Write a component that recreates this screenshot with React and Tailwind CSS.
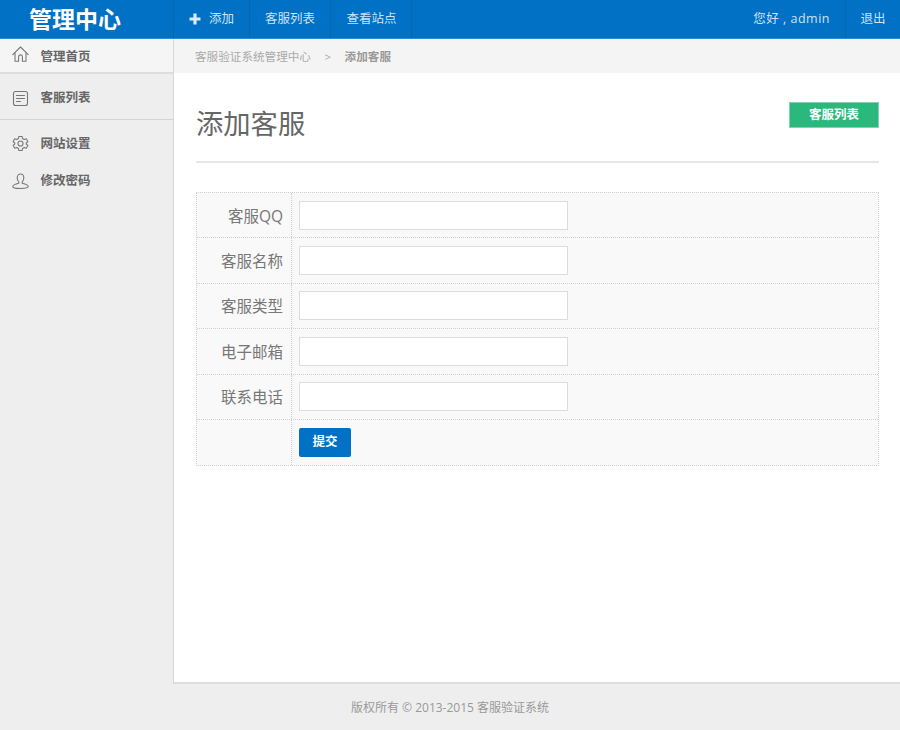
import React from 'react'

const font = { fontFamily: '"Open Sans", "Noto Sans CJK SC", sans-serif' }

function HomeIcon() {
  return (
    <svg width="17" height="17" viewBox="0 0 17 17" fill="none" stroke="#777" strokeWidth="1.1" strokeLinejoin="round" strokeLinecap="round">
      <path d="M0.8 8.6 8.5 1 16.2 8.6" />
      <path d="M3 7v8.2h3.6v-4.400a1.900 1.900 0 0 1 3.800 0v4.400H14V7" />
    </svg>
  )
}

function ListIcon() {
  return (
    <svg width="17" height="17" viewBox="0 0 17 17" fill="none" stroke="#777" strokeWidth="1.1" strokeLinecap="round">
      <rect x="1.5" y="1.5" width="14" height="14" rx="2" />
      <path d="M4.500 5.500h8M4.500 8.500h8M4.500 11.500h4" />
    </svg>
  )
}

function GearIcon() {
  return (
    <svg width="17" height="17" viewBox="0 0 24 24" fill="none" stroke="#777" strokeWidth="1.5" strokeLinejoin="round">
      <path d="M9.700 2h4.600l.6 3 2.300 1.300 2.900-1 2.300 4-2.300 2v1.400l2.300 2-2.300 4-2.900-1-2.300 1.300-.6 3H9.700l-.6-3-2.300-1.300-2.900 1-2.300-4 2.300-2v-1.400l-2.300-2 2.300-4 2.900 1L9.100 5z" />
      <circle cx="12" cy="12" r="3.600" />
    </svg>
  )
}

function UserIcon() {
  return (
    <svg width="17" height="17" viewBox="0 0 17 17" fill="none" stroke="#777" strokeWidth="1.1" strokeLinejoin="round">
      <path d="M5.200 5c0-2.200 1.400-4 3.300-4s3.300 1.800 3.300 4c0 1.600-.7 3-1.600 3.800v1.400c2.300.5 6 1.400 6 3.400 0 1.200-1.400 1.900-7.700 1.900S.8 14.800.8 13.600c0-2 3.700-2.900 6-3.400V8.800C5.900 8 5.200 6.600 5.200 5z" />
    </svg>
  )
}

function Sidebar() {
  return (
    <div className="w-[174px] shrink-0 border-r border-[#d8d8d8] bg-[#eeeeee]">
      <div className="flex h-[35px] items-center border-b-2 border-[#dddddd] bg-[#f5f5f5]">
        <span className="mr-[11.500px] mb-[2px] ml-3 flex"><HomeIcon /></span>
        <span className="mt-[4px] text-[12.500px] font-bold text-[#666]">管理首页</span>
      </div>
      <div className="flex h-[46px] items-center border-b border-[#d4d4d4] pt-[3px]">
        <span className="mr-[11.500px] ml-3 flex"><ListIcon /></span>
        <span className="text-[12.500px] font-bold text-[#666]">客服列表</span>
      </div>
      <div className="flex h-[48px] items-center">
        <span className="mr-[11.500px] mb-[2px] ml-3 flex"><GearIcon /></span>
        <span className="text-[12.500px] font-bold text-[#666]">网站设置</span>
      </div>
      <div className="flex h-[26px] items-center">
        <span className="mr-[11.500px] ml-3 flex"><UserIcon /></span>
        <span className="text-[12.500px] font-bold text-[#666]">修改密码</span>
      </div>
    </div>
  )
}

function Row({ label, last }) {
  return (
    <div className={'flex h-[45.400px] ' + (last ? '' : 'border-b border-dotted border-[#d0d0d0]')}>
      <div className="flex w-[94.500px] shrink-0 items-center justify-end border-r border-dotted border-[#d0d0d0] pt-[2px] pr-[7.500px] text-[15.500px] text-[#777]">
        {label}
      </div>
      <div className="flex flex-1 items-center pl-[7.500px]">
        {label ? (
          <input className="h-[29px] w-[269px] border border-[#dcdcdc] bg-white outline-none" />
        ) : (
          <button className="h-[29px] w-[52px] rounded-[2px] bg-[#0071c5] text-[12.500px] font-bold text-white">提交</button>
        )}
      </div>
    </div>
  )
}

export default function App() {
  return (
    <div className="flex h-[730px] w-[900px] flex-col overflow-hidden bg-[#eeeeee]" style={font}>
      <header className="flex h-[39px] shrink-0 items-stretch border-b border-[#2b8ad6] bg-[#0071c5]">
        <div className="flex w-[174px] shrink-0 items-center justify-center border-r border-[#0a65ac] pr-[23px] text-[23px] leading-none font-bold text-white">
          管理中心
        </div>
        <a className="flex w-[76px] items-center border-r border-[#0a65ac] pt-[1px] pl-[15px] text-[12.500px] text-[#cfe3f3]">
          <svg className="mr-[8px] mb-[1px]" width="12" height="12" viewBox="0 0 12 12" fill="#dcebf6"><path d="M4.400 0.500h3.200v3.900h3.900v3.200H7.600v3.900H4.400V7.600H0.500V4.400h3.900z" /></svg>
          添加
        </a>
        <a className="flex w-[81px] items-center justify-center border-r border-[#0a65ac] pt-[1px] text-[12.500px] text-[#cfe3f3]">客服列表</a>
        <a className="flex w-[81px] items-center justify-center border-r border-[#0a65ac] pt-[1px] pl-[1px] text-[12.500px] text-[#cfe3f3]">查看站点</a>
        <div className="flex-1" />
        <div className="flex items-center pt-[1px] pr-[15px] text-[12.500px] tracking-[0.500px] text-[#cfe3f3]">您好 , admin</div>
        <a className="flex w-[55px] items-center justify-center border-l border-[#0a65ac] pt-[1px] text-[12.500px] text-[#cfe3f3]">退出</a>
      </header>

      <div className="flex h-[645px] shrink-0">
        <Sidebar />
        <main className="flex flex-1 flex-col border-b-2 border-[#dddddd] bg-white">
          <div className="flex h-[34px] shrink-0 items-center bg-[#f4f4f4] pt-[2px] pl-[21px] text-[11.600px] text-[#aaa]">
            <span>客服验证系统管理中心</span>
            <span className="mx-[13.500px]">&gt;</span>
            <span className="font-bold text-[#999]">添加客服</span>
          </div>
          <div className="flex-1 pr-[21px] pl-[22px]">
            <div className="flex h-[90px] items-start justify-between border-b-2 border-[#e6e6e6]">
              <h1 className="mt-[29px] text-[27.300px] leading-[44px] text-[#666]">添加客服</h1>
              <a className="mt-[29px] flex h-[26px] w-[90px] items-center justify-center border border-[#7fd3b0] bg-[#2ab87c] text-[12.500px] font-bold text-white">客服列表</a>
            </div>
            <div className="mt-[29px] border border-dotted border-[#d0d0d0] bg-[#f9f9f9]">
              <Row label="客服QQ" />
              <Row label="客服名称" />
              <Row label="客服类型" />
              <Row label="电子邮箱" />
              <Row label="联系电话" />
              <Row last />
            </div>
          </div>
        </main>
      </div>

      <footer className="flex flex-1 items-center justify-center pt-[2px] text-[12px] text-[#999]">
        版权所有 © 2013-2015 客服验证系统
      </footer>
    </div>
  )
}
